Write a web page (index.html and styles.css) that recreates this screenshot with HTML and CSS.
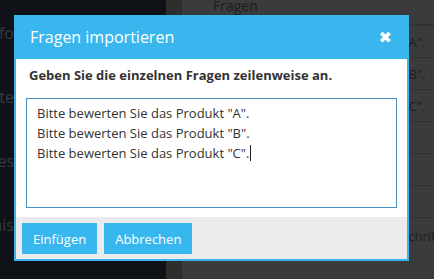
FILE: index.html
```html
<!DOCTYPE html>
<html lang="de">
<head>
  <meta charset="UTF-8" />
  <title>Fragen importieren</title>
  <link rel="stylesheet" href="styles.css">
</head>
<body>

  <div class="page">
    <aside class="sidebar">
      <div class="side-item">Info</div>
      <div class="side-item">Seite</div>
      <div class="side-item">Fragebogen des</div>
      <div class="side-item">Ergebnis</div>
    </aside>
    <div class="gutter"></div>
    <main class="content">
      <div class="row head">Fragen</div>
      <div class="row">Bitte bewerten Sie das Produkt "A".</div>
      <div class="row">Bitte bewerten Sie das Produkt "B".</div>
      <div class="row">Bitte bewerten Sie das Produkt "C".</div>
      <div class="row"></div>
      <div class="row"></div>
      <div class="row"></div>
      <div class="row sub">Zwischenüberschrift</div>
    </main>
  </div>

  <!-- Import dialog -->
  <div class="modal">
    <div class="modal-header">
      <h2>Fragen importieren</h2>
      <span class="close-btn">&#10006;</span>
    </div>
    <div class="modal-body">
      <p class="hint">Geben Sie die einzelnen Fragen zeilenweise an.</p>
      <div class="input-box">
        <div>Bitte bewerten Sie das Produkt "A".</div>
        <div>Bitte bewerten Sie das Produkt "B".</div>
        <div>Bitte bewerten Sie das Produkt "C".<span class="caret"></span></div>
      </div>
    </div>
    <div class="modal-footer">
      <button class="btn">Einfügen</button>
      <button class="btn">Abbrechen</button>
    </div>
  </div>

</body>
</html>
```

FILE: styles.css
```css
* { margin: 0; padding: 0; box-sizing: border-box; }
body { font-family: 'Open Sans', sans-serif; background: #3b3b3b; color: #333; overflow: hidden; }

.page {
  display: flex;
  height: 279px;
}

/* --- dimmed page behind the dialog --- */
.sidebar {
  flex: 0 0 166px;
  background: #0f1216;
  padding-top: 22px;
}

.side-item {
  width: 14px;
  height: 64px;
  font-size: 16px;
  color: #363a41;
  white-space: nowrap;
  overflow: hidden;
  display: flex;
  justify-content: flex-end;
}

.gutter {
  flex: 0 0 16px;
  background: #2e2e2f;
}

.content {
  flex: 1;
  min-width: 0;
  overflow: hidden;
  background: #3b3b3b;
  padding-left: 31px;
}

.row {
  height: 32px;
  line-height: 32px;
  font-size: 13px;
  color: #1d1d1d;
  border-bottom: 1px solid #313131;
  white-space: nowrap;
}

.row.head {
  height: 26px;
  line-height: 12px;
  font-size: 14px;
  border-bottom: 2px solid #323232;
}

.row.sub {
  border-bottom: none;
  padding-left: 104px;
  margin-top: 2px;
}

/* --- modal --- */
.modal {
  position: absolute;
  left: 14px;
  top: 15px;
  width: 395px;
  border: 2px solid #39b4ec;
  border-top: none;
  background: white;
}

.modal-header {
  background: #39b6ee;
  height: 44px;
  display: flex;
  align-items: center;
  justify-content: space-between;
  margin: 0 -2px;
  padding: 0 17px 0 16px;
}

.modal-header h2 {
  font-size: 16px;
  font-weight: 400;
  color: white;
}

.close-btn {
  color: white;
  font-size: 16px;
  font-family: 'DejaVu Sans', sans-serif;
  font-weight: bold;
}

.modal-body {
  padding: 7px 10px 9px 10px;
}

.hint {
  font-size: 13px;
  font-weight: 700;
  color: #333;
  padding-left: 3px;
}

.input-box {
  margin-top: 14px;
  height: 110px;
  border: 1px solid #4a8fc2;
  padding: 4px 10px;
  font-size: 13px;
  line-height: 20px;
  color: #333;
}

.caret {
  display: inline-block;
  width: 1px;
  height: 16px;
  background: #222;
  vertical-align: -3px;
  margin-left: 1px;
}

.modal-footer {
  background: #ebebeb;
  display: flex;
  gap: 7px;
  padding: 6px 6px 5px 6px;
}

.btn {
  background: #38b6ee;
  color: white;
  border: none;
  font-family: 'Open Sans', sans-serif;
  font-size: 13px;
  height: 31px;
  padding: 0 11px;
}
```
